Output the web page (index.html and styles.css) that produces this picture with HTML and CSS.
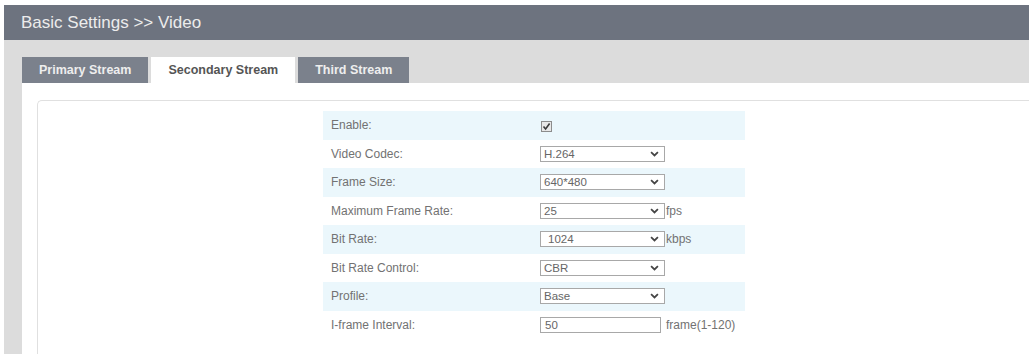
FILE: index.html
```html
<!DOCTYPE html>
<html lang="en">
<head>
  <meta charset="UTF-8">
  <title>Basic Settings - Video</title>
  <link rel="stylesheet" href="styles.css">
</head>
<body>

  <div class="page">
    <div class="title-bar">Basic Settings &gt;&gt; Video</div>

    <div class="main">
      <div class="tabs">
        <div class="tab">Primary Stream</div>
        <div class="tab active">Secondary Stream</div>
        <div class="tab">Third Stream</div>
      </div>

      <div class="tab-body">
        <div class="panel">
          <table class="form">
            <tr>
              <td class="label">Enable:</td>
              <td>
                <span class="check">
                  <svg width="11" height="11" viewBox="0 0 11 11"><path d="M2.5 5.5 L4.6 8 L8.6 2.6" fill="none" stroke="#3a3a3a" stroke-width="1.6"/></svg>
                </span>
              </td>
            </tr>
            <tr>
              <td class="label">Video Codec:</td>
              <td>
                <div class="select"><span>H.264</span><svg width="9" height="6" viewBox="0 0 10 7"><path d="M1 1.2 L5 5.2 L9 1.2" fill="none" stroke="#444" stroke-width="2"/></svg></div>
              </td>
            </tr>
            <tr>
              <td class="label">Frame Size:</td>
              <td>
                <div class="select"><span>640*480</span><svg width="9" height="6" viewBox="0 0 10 7"><path d="M1 1.2 L5 5.2 L9 1.2" fill="none" stroke="#444" stroke-width="2"/></svg></div>
              </td>
            </tr>
            <tr>
              <td class="label">Maximum Frame Rate:</td>
              <td>
                <div class="select"><span>25</span><svg width="9" height="6" viewBox="0 0 10 7"><path d="M1 1.2 L5 5.2 L9 1.2" fill="none" stroke="#444" stroke-width="2"/></svg></div><span class="unit">fps</span>
              </td>
            </tr>
            <tr>
              <td class="label">Bit Rate:</td>
              <td>
                <div class="select"><span class="pad">1024</span><svg width="9" height="6" viewBox="0 0 10 7"><path d="M1 1.2 L5 5.2 L9 1.2" fill="none" stroke="#444" stroke-width="2"/></svg></div><span class="unit">kbps</span>
              </td>
            </tr>
            <tr>
              <td class="label">Bit Rate Control:</td>
              <td>
                <div class="select"><span>CBR</span><svg width="9" height="6" viewBox="0 0 10 7"><path d="M1 1.2 L5 5.2 L9 1.2" fill="none" stroke="#444" stroke-width="2"/></svg></div>
              </td>
            </tr>
            <tr>
              <td class="label">Profile:</td>
              <td>
                <div class="select"><span>Base</span><svg width="9" height="6" viewBox="0 0 10 7"><path d="M1 1.2 L5 5.2 L9 1.2" fill="none" stroke="#444" stroke-width="2"/></svg></div>
              </td>
            </tr>
            <tr>
              <td class="label">I-frame Interval:</td>
              <td>
                <div class="text-input">50</div><span class="unit wide">frame(1-120)</span>
              </td>
            </tr>
          </table>
        </div>
      </div>
    </div>
  </div>

</body>
</html>
```

FILE: styles.css
```css
:root {
  --bar-gray: #6d737f;
  --tab-gray: #7b818c;
  --area-gray: #dcdcdc;
  --row-blue: #ebf7fc;
  --text-gray: #727272;
}
body {
  margin: 0;
  font-family: 'Liberation Sans', Arial, sans-serif;
  background: white;
  overflow: hidden;
}
.page {
  display: flex;
  flex-direction: column;
  height: 100vh;
  padding: 5px 0 0 4px;
  box-sizing: border-box;
}
.title-bar {
  height: 35px;
  line-height: 35px;
  background: var(--bar-gray);
  color: #ececec;
  font-size: 17px;
  padding-left: 17px;
  flex-shrink: 0;
}
.main {
  flex: 1;
  display: flex;
  flex-direction: column;
  background: var(--area-gray);
  padding: 17px 0 0 18px;
}
.tabs {
  display: flex;
  gap: 3px;
  height: 26px;
}
.tab {
  padding: 0 17px;
  line-height: 27px;
  background: var(--tab-gray);
  color: #eeeeee;
  font-weight: bold;
  font-size: 12.5px;
}
.tab.active {
  background: white;
  color: #555;
}
.tab-body {
  flex: 1;
  display: flex;
  background: white;
  padding: 17px 0 0 15px;
}
.panel {
  flex: 1;
  border: 1px solid #e0e0e0;
  border-bottom: none;
  border-right: none;
  border-radius: 5px 0 0 0;
  padding-top: 10px;
}
.form {
  margin-left: 285px;
  width: 422px;
  border-collapse: collapse;
  font-size: 12px;
  color: var(--text-gray);
}
.form tr:nth-child(odd) {
  background: var(--row-blue);
}
.form td {
  height: 28.5px;
  padding: 0;
  vertical-align: middle;
  white-space: nowrap;
}
.form td.label {
  width: 209px;
  padding-left: 8px;
}
.check {
  display: inline-flex;
  width: 11px;
  height: 11px;
  border: 1px solid #8c8c8c;
  background: #e8e8e8;
  box-sizing: border-box;
  vertical-align: middle;
  margin-left: 1px;
}
.check svg {
  margin: -1px;
}
.select {
  display: inline-flex;
  align-items: center;
  justify-content: space-between;
  width: 125px;
  height: 16px;
  border: 1px solid #a8a8a8;
  box-sizing: border-box;
  padding: 0 5px 0 3px;
  background: white;
  color: #666;
  font-size: 11.5px;
  vertical-align: middle;
}
.select .pad {
  padding-left: 4px;
}
.text-input {
  display: inline-block;
  width: 121px;
  height: 16px;
  line-height: 14px;
  border: 1px solid #a8a8a8;
  box-sizing: border-box;
  padding-left: 4px;
  color: #666;
  font-size: 11.5px;
  vertical-align: middle;
}
.unit {
  margin-left: 1px;
  vertical-align: middle;
}
.unit.wide {
  margin-left: 5px;
}
```
